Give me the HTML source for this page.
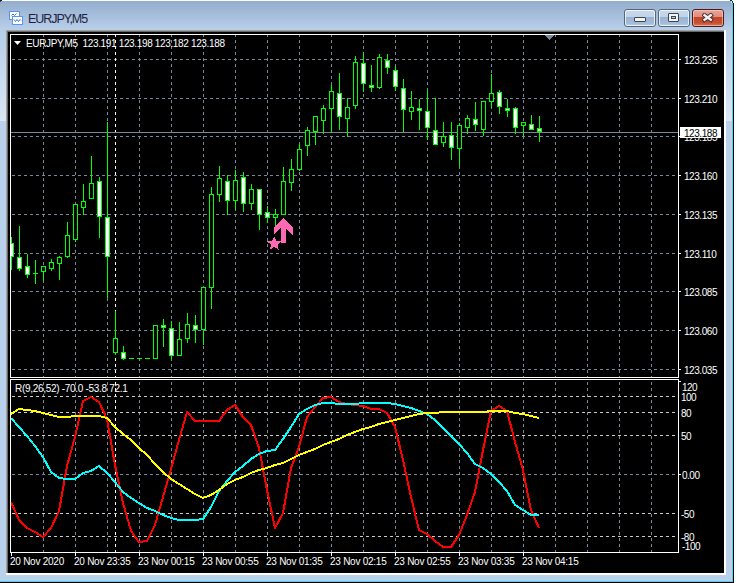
<!DOCTYPE html>
<html><head><meta charset="utf-8">
<style>
html,body{margin:0;padding:0;width:736px;height:583px;overflow:hidden;background:#ffffff;}
#win{position:absolute;left:0;top:1px;width:732px;height:581px;background:#b9d1ea;}
#title{position:absolute;left:0;top:0;width:732px;height:29px;background:linear-gradient(#93adcd,#b9d0ea);}
#redge{position:absolute;left:732px;top:3px;width:1px;height:578px;background:#40d8fa;}
#redge2{position:absolute;left:733px;top:3px;width:1px;height:580px;background:#000;}
#bedge{position:absolute;left:0;top:581px;width:733px;height:1px;background:#3ad6f6;}
#bedge2{position:absolute;left:0;top:582px;width:734px;height:1px;background:#000;}
.lbl{position:absolute;font-family:"Liberation Sans",sans-serif;font-size:10px;line-height:12px;color:#fff;white-space:nowrap;}
#client{position:absolute;left:6px;top:30px;width:720px;height:545px;}
#ttl{position:absolute;left:28px;top:12px;font-family:"Liberation Sans",sans-serif;font-size:12.5px;line-height:14px;letter-spacing:-1.05px;color:#1e1e40;}
.tb{position:absolute;top:9px;width:30px;height:16px;border:1px solid #56657a;border-radius:3px;background:linear-gradient(#c6d9ee 0,#bfd3ea 45%,#98b3d2 45%,#a4bddb 85%,#bcd2ea 100%);overflow:hidden;}
.tb .hi{position:absolute;left:0;top:0;right:0;bottom:0;border:1px solid rgba(255,255,255,0.7);border-radius:2px;}
.tb.cl{border-color:#4a1a1e;background:linear-gradient(#e9a598 0,#df8b78 45%,#c44428 45%,#c8502e 80%,#d9775c 100%);}
.tb.cl .hi{border-color:rgba(255,210,200,0.6);}
</style></head><body>
<div id="win">
 <div id="title"></div>
</div>
<div style="position:absolute;left:0;top:0;width:2px;height:1px;background:#222"></div><div style="position:absolute;left:0;top:1px;width:1px;height:1px;background:#444"></div>
<div style="position:absolute;left:730px;top:0;width:2px;height:1px;background:#0a2a30"></div><div style="position:absolute;left:732px;top:1px;width:1px;height:2px;background:#0a3a40"></div><div style="position:absolute;left:731px;top:1px;width:1px;height:2px;background:#c8f4fc"></div>
<div style="position:absolute;left:0;top:30px;width:6px;height:91px;background:linear-gradient(#b6cee8,#dbe7f4)"></div>
<div style="position:absolute;left:726px;top:30px;width:6px;height:91px;background:linear-gradient(#b6cee8,#dbe7f4)"></div>
<div style="position:absolute;left:731px;top:121px;width:1px;height:460px;background:#c4cde8"></div>
<div style="position:absolute;left:0;top:580px;width:732px;height:1px;background:#c4cde8"></div>
<div id="redge"></div><div id="redge2"></div><div id="bedge"></div><div id="bedge2"></div>
<div style="position:absolute;left:6px;top:30px;width:718px;height:1px;background:#a0a0a0"></div>
<div style="position:absolute;left:6px;top:30px;width:1px;height:543px;background:#a0a0a0"></div>
<div style="position:absolute;left:7px;top:31px;width:717px;height:1px;background:#696969"></div>
<div style="position:absolute;left:7px;top:31px;width:1px;height:542px;background:#696969"></div>
<div style="position:absolute;left:6px;top:573px;width:720px;height:2px;background:#fff"></div>
<div style="position:absolute;left:724px;top:30px;width:2px;height:545px;background:#fff"></div>
<div style="position:absolute;left:8px;top:32px;width:716px;height:541px;background:#000"></div>
<svg style="position:absolute;left:0;top:0" width="736" height="583" shape-rendering="crispEdges">
<defs><clipPath id="cm"><rect x="11" y="35" width="667" height="342"/></clipPath><clipPath id="ci"><rect x="11" y="380" width="667" height="172"/></clipPath></defs>
<line x1="43.5" y1="34" x2="43.5" y2="377" stroke="#778899" stroke-width="1" stroke-dasharray="3 3" clip-path="url(#cm)"/>
<line x1="43.5" y1="376" x2="43.5" y2="552" stroke="#778899" stroke-width="1" stroke-dasharray="3 3" clip-path="url(#ci)"/>
<line x1="75.5" y1="34" x2="75.5" y2="377" stroke="#778899" stroke-width="1" stroke-dasharray="3 3" clip-path="url(#cm)"/>
<line x1="75.5" y1="376" x2="75.5" y2="552" stroke="#778899" stroke-width="1" stroke-dasharray="3 3" clip-path="url(#ci)"/>
<line x1="107.5" y1="34" x2="107.5" y2="377" stroke="#778899" stroke-width="1" stroke-dasharray="3 3" clip-path="url(#cm)"/>
<line x1="107.5" y1="376" x2="107.5" y2="552" stroke="#778899" stroke-width="1" stroke-dasharray="3 3" clip-path="url(#ci)"/>
<line x1="139.5" y1="34" x2="139.5" y2="377" stroke="#778899" stroke-width="1" stroke-dasharray="3 3" clip-path="url(#cm)"/>
<line x1="139.5" y1="376" x2="139.5" y2="552" stroke="#778899" stroke-width="1" stroke-dasharray="3 3" clip-path="url(#ci)"/>
<line x1="171.5" y1="34" x2="171.5" y2="377" stroke="#778899" stroke-width="1" stroke-dasharray="3 3" clip-path="url(#cm)"/>
<line x1="171.5" y1="376" x2="171.5" y2="552" stroke="#778899" stroke-width="1" stroke-dasharray="3 3" clip-path="url(#ci)"/>
<line x1="203.5" y1="34" x2="203.5" y2="377" stroke="#778899" stroke-width="1" stroke-dasharray="3 3" clip-path="url(#cm)"/>
<line x1="203.5" y1="376" x2="203.5" y2="552" stroke="#778899" stroke-width="1" stroke-dasharray="3 3" clip-path="url(#ci)"/>
<line x1="235.5" y1="34" x2="235.5" y2="377" stroke="#778899" stroke-width="1" stroke-dasharray="3 3" clip-path="url(#cm)"/>
<line x1="235.5" y1="376" x2="235.5" y2="552" stroke="#778899" stroke-width="1" stroke-dasharray="3 3" clip-path="url(#ci)"/>
<line x1="267.5" y1="34" x2="267.5" y2="377" stroke="#778899" stroke-width="1" stroke-dasharray="3 3" clip-path="url(#cm)"/>
<line x1="267.5" y1="376" x2="267.5" y2="552" stroke="#778899" stroke-width="1" stroke-dasharray="3 3" clip-path="url(#ci)"/>
<line x1="299.5" y1="34" x2="299.5" y2="377" stroke="#778899" stroke-width="1" stroke-dasharray="3 3" clip-path="url(#cm)"/>
<line x1="299.5" y1="376" x2="299.5" y2="552" stroke="#778899" stroke-width="1" stroke-dasharray="3 3" clip-path="url(#ci)"/>
<line x1="331.5" y1="34" x2="331.5" y2="377" stroke="#778899" stroke-width="1" stroke-dasharray="3 3" clip-path="url(#cm)"/>
<line x1="331.5" y1="376" x2="331.5" y2="552" stroke="#778899" stroke-width="1" stroke-dasharray="3 3" clip-path="url(#ci)"/>
<line x1="363.5" y1="34" x2="363.5" y2="377" stroke="#778899" stroke-width="1" stroke-dasharray="3 3" clip-path="url(#cm)"/>
<line x1="363.5" y1="376" x2="363.5" y2="552" stroke="#778899" stroke-width="1" stroke-dasharray="3 3" clip-path="url(#ci)"/>
<line x1="395.5" y1="34" x2="395.5" y2="377" stroke="#778899" stroke-width="1" stroke-dasharray="3 3" clip-path="url(#cm)"/>
<line x1="395.5" y1="376" x2="395.5" y2="552" stroke="#778899" stroke-width="1" stroke-dasharray="3 3" clip-path="url(#ci)"/>
<line x1="427.5" y1="34" x2="427.5" y2="377" stroke="#778899" stroke-width="1" stroke-dasharray="3 3" clip-path="url(#cm)"/>
<line x1="427.5" y1="376" x2="427.5" y2="552" stroke="#778899" stroke-width="1" stroke-dasharray="3 3" clip-path="url(#ci)"/>
<line x1="459.5" y1="34" x2="459.5" y2="377" stroke="#778899" stroke-width="1" stroke-dasharray="3 3" clip-path="url(#cm)"/>
<line x1="459.5" y1="376" x2="459.5" y2="552" stroke="#778899" stroke-width="1" stroke-dasharray="3 3" clip-path="url(#ci)"/>
<line x1="491.5" y1="34" x2="491.5" y2="377" stroke="#778899" stroke-width="1" stroke-dasharray="3 3" clip-path="url(#cm)"/>
<line x1="491.5" y1="376" x2="491.5" y2="552" stroke="#778899" stroke-width="1" stroke-dasharray="3 3" clip-path="url(#ci)"/>
<line x1="523.5" y1="34" x2="523.5" y2="377" stroke="#778899" stroke-width="1" stroke-dasharray="3 3" clip-path="url(#cm)"/>
<line x1="523.5" y1="376" x2="523.5" y2="552" stroke="#778899" stroke-width="1" stroke-dasharray="3 3" clip-path="url(#ci)"/>
<line x1="555.5" y1="34" x2="555.5" y2="377" stroke="#778899" stroke-width="1" stroke-dasharray="3 3" clip-path="url(#cm)"/>
<line x1="555.5" y1="376" x2="555.5" y2="552" stroke="#778899" stroke-width="1" stroke-dasharray="3 3" clip-path="url(#ci)"/>
<line x1="587.5" y1="34" x2="587.5" y2="377" stroke="#778899" stroke-width="1" stroke-dasharray="3 3" clip-path="url(#cm)"/>
<line x1="587.5" y1="376" x2="587.5" y2="552" stroke="#778899" stroke-width="1" stroke-dasharray="3 3" clip-path="url(#ci)"/>
<line x1="619.5" y1="34" x2="619.5" y2="377" stroke="#778899" stroke-width="1" stroke-dasharray="3 3" clip-path="url(#cm)"/>
<line x1="619.5" y1="376" x2="619.5" y2="552" stroke="#778899" stroke-width="1" stroke-dasharray="3 3" clip-path="url(#ci)"/>
<line x1="651.5" y1="34" x2="651.5" y2="377" stroke="#778899" stroke-width="1" stroke-dasharray="3 3" clip-path="url(#cm)"/>
<line x1="651.5" y1="376" x2="651.5" y2="552" stroke="#778899" stroke-width="1" stroke-dasharray="3 3" clip-path="url(#ci)"/>
<line x1="6" y1="59.5" x2="678" y2="59.5" stroke="#778899" stroke-width="1" stroke-dasharray="3 3" clip-path="url(#cm)"/>
<line x1="6" y1="98.5" x2="678" y2="98.5" stroke="#778899" stroke-width="1" stroke-dasharray="3 3" clip-path="url(#cm)"/>
<line x1="6" y1="136.5" x2="678" y2="136.5" stroke="#778899" stroke-width="1" stroke-dasharray="3 3" clip-path="url(#cm)"/>
<line x1="6" y1="175.5" x2="678" y2="175.5" stroke="#778899" stroke-width="1" stroke-dasharray="3 3" clip-path="url(#cm)"/>
<line x1="6" y1="214.5" x2="678" y2="214.5" stroke="#778899" stroke-width="1" stroke-dasharray="3 3" clip-path="url(#cm)"/>
<line x1="6" y1="253.5" x2="678" y2="253.5" stroke="#778899" stroke-width="1" stroke-dasharray="3 3" clip-path="url(#cm)"/>
<line x1="6" y1="291.5" x2="678" y2="291.5" stroke="#778899" stroke-width="1" stroke-dasharray="3 3" clip-path="url(#cm)"/>
<line x1="6" y1="330.5" x2="678" y2="330.5" stroke="#778899" stroke-width="1" stroke-dasharray="3 3" clip-path="url(#cm)"/>
<line x1="6" y1="369.5" x2="678" y2="369.5" stroke="#778899" stroke-width="1" stroke-dasharray="3 3" clip-path="url(#cm)"/>
<line x1="115.5" y1="34" x2="115.5" y2="377" stroke="#ffffff" stroke-width="1" stroke-dasharray="3 3" clip-path="url(#cm)"/>
<line x1="115.5" y1="376" x2="115.5" y2="552" stroke="#ffffff" stroke-width="1" stroke-dasharray="3 3" clip-path="url(#ci)"/>
<line x1="6" y1="396.5" x2="678" y2="396.5" stroke="#cccccc" stroke-width="1" stroke-dasharray="3 3" clip-path="url(#ci)"/>
<line x1="6" y1="412.5" x2="678" y2="412.5" stroke="#cccccc" stroke-width="1" stroke-dasharray="3 3" clip-path="url(#ci)"/>
<line x1="6" y1="435.5" x2="678" y2="435.5" stroke="#cccccc" stroke-width="1" stroke-dasharray="3 3" clip-path="url(#ci)"/>
<line x1="6" y1="513.5" x2="678" y2="513.5" stroke="#cccccc" stroke-width="1" stroke-dasharray="3 3" clip-path="url(#ci)"/>
<line x1="6" y1="536.5" x2="678" y2="536.5" stroke="#cccccc" stroke-width="1" stroke-dasharray="3 3" clip-path="url(#ci)"/>
<line x1="6" y1="474.5" x2="678" y2="474.5" stroke="#778899" stroke-width="1" stroke-dasharray="3 3" clip-path="url(#ci)"/>
<line x1="11" y1="132.5" x2="678" y2="132.5" stroke="#778899" stroke-width="1"/>
<g clip-path="url(#cm)">
<rect x="11" y="237" width="1" height="33" fill="#00ff00"/>
<rect x="9" y="243" width="5" height="14" fill="#00ff00"/>
<rect x="10" y="244" width="3" height="12" fill="#ffffff"/>
<rect x="19" y="226" width="1" height="45" fill="#00ff00"/>
<rect x="17" y="257" width="5" height="12" fill="#00ff00"/>
<rect x="18" y="258" width="3" height="10" fill="#ffffff"/>
<rect x="27" y="254" width="1" height="24" fill="#00ff00"/>
<rect x="25" y="266" width="5" height="9" fill="#00ff00"/>
<rect x="26" y="267" width="3" height="7" fill="#ffffff"/>
<rect x="35" y="260" width="1" height="24" fill="#00ff00"/>
<rect x="33" y="273" width="5" height="1" fill="#00ff00"/>
<rect x="43" y="266" width="1" height="15" fill="#00ff00"/>
<rect x="41" y="266" width="5" height="6" fill="#00ff00"/>
<rect x="42" y="267" width="3" height="4" fill="#000000"/>
<rect x="51" y="259" width="1" height="12" fill="#00ff00"/>
<rect x="49" y="262" width="5" height="7" fill="#00ff00"/>
<rect x="50" y="263" width="3" height="5" fill="#000000"/>
<rect x="59" y="256" width="1" height="24" fill="#00ff00"/>
<rect x="57" y="257" width="5" height="7" fill="#00ff00"/>
<rect x="58" y="258" width="3" height="5" fill="#000000"/>
<rect x="67" y="222" width="1" height="36" fill="#00ff00"/>
<rect x="65" y="235" width="5" height="22" fill="#00ff00"/>
<rect x="66" y="236" width="3" height="20" fill="#000000"/>
<rect x="75" y="204" width="1" height="38" fill="#00ff00"/>
<rect x="73" y="204" width="5" height="36" fill="#00ff00"/>
<rect x="74" y="205" width="3" height="34" fill="#000000"/>
<rect x="83" y="184" width="1" height="31" fill="#00ff00"/>
<rect x="81" y="201" width="5" height="7" fill="#00ff00"/>
<rect x="82" y="202" width="3" height="5" fill="#000000"/>
<rect x="91" y="156" width="1" height="43" fill="#00ff00"/>
<rect x="89" y="183" width="5" height="16" fill="#00ff00"/>
<rect x="90" y="184" width="3" height="14" fill="#000000"/>
<rect x="99" y="177" width="1" height="61" fill="#00ff00"/>
<rect x="97" y="181" width="5" height="36" fill="#00ff00"/>
<rect x="98" y="182" width="3" height="34" fill="#ffffff"/>
<rect x="107" y="122" width="1" height="176" fill="#00ff00"/>
<rect x="105" y="217" width="5" height="40" fill="#00ff00"/>
<rect x="106" y="218" width="3" height="38" fill="#ffffff"/>
<rect x="115" y="311" width="1" height="44" fill="#00ff00"/>
<rect x="113" y="338" width="5" height="15" fill="#00ff00"/>
<rect x="114" y="339" width="3" height="13" fill="#000000"/>
<rect x="123" y="346" width="1" height="14" fill="#00ff00"/>
<rect x="121" y="352" width="5" height="7" fill="#00ff00"/>
<rect x="122" y="353" width="3" height="5" fill="#ffffff"/>
<rect x="131" y="358" width="1" height="1" fill="#00ff00"/>
<rect x="129" y="358" width="5" height="1" fill="#00ff00"/>
<rect x="139" y="358" width="1" height="1" fill="#00ff00"/>
<rect x="137" y="358" width="5" height="1" fill="#00ff00"/>
<rect x="147" y="358" width="1" height="1" fill="#00ff00"/>
<rect x="145" y="358" width="5" height="1" fill="#00ff00"/>
<rect x="155" y="325" width="1" height="34" fill="#00ff00"/>
<rect x="153" y="325" width="5" height="34" fill="#00ff00"/>
<rect x="154" y="326" width="3" height="32" fill="#000000"/>
<rect x="163" y="319" width="1" height="28" fill="#00ff00"/>
<rect x="161" y="325" width="5" height="3" fill="#00ff00"/>
<rect x="162" y="326" width="3" height="1" fill="#ffffff"/>
<rect x="171" y="321" width="1" height="38" fill="#00ff00"/>
<rect x="169" y="328" width="5" height="28" fill="#00ff00"/>
<rect x="170" y="329" width="3" height="26" fill="#ffffff"/>
<rect x="179" y="322" width="1" height="34" fill="#00ff00"/>
<rect x="177" y="339" width="5" height="17" fill="#00ff00"/>
<rect x="178" y="340" width="3" height="15" fill="#000000"/>
<rect x="187" y="313" width="1" height="30" fill="#00ff00"/>
<rect x="185" y="324" width="5" height="15" fill="#00ff00"/>
<rect x="186" y="325" width="3" height="13" fill="#000000"/>
<rect x="195" y="315" width="1" height="28" fill="#00ff00"/>
<rect x="193" y="325" width="5" height="5" fill="#00ff00"/>
<rect x="194" y="326" width="3" height="3" fill="#ffffff"/>
<rect x="203" y="287" width="1" height="58" fill="#00ff00"/>
<rect x="201" y="287" width="5" height="43" fill="#00ff00"/>
<rect x="202" y="288" width="3" height="41" fill="#000000"/>
<rect x="211" y="187" width="1" height="122" fill="#00ff00"/>
<rect x="209" y="194" width="5" height="94" fill="#00ff00"/>
<rect x="210" y="195" width="3" height="92" fill="#000000"/>
<rect x="219" y="166" width="1" height="36" fill="#00ff00"/>
<rect x="217" y="178" width="5" height="17" fill="#00ff00"/>
<rect x="218" y="179" width="3" height="15" fill="#000000"/>
<rect x="227" y="175" width="1" height="40" fill="#00ff00"/>
<rect x="225" y="181" width="5" height="20" fill="#00ff00"/>
<rect x="226" y="182" width="3" height="18" fill="#ffffff"/>
<rect x="235" y="170" width="1" height="40" fill="#00ff00"/>
<rect x="233" y="180" width="5" height="21" fill="#00ff00"/>
<rect x="234" y="181" width="3" height="19" fill="#000000"/>
<rect x="243" y="172" width="1" height="40" fill="#00ff00"/>
<rect x="241" y="177" width="5" height="27" fill="#00ff00"/>
<rect x="242" y="178" width="3" height="25" fill="#ffffff"/>
<rect x="251" y="184" width="1" height="26" fill="#00ff00"/>
<rect x="249" y="189" width="5" height="15" fill="#00ff00"/>
<rect x="250" y="190" width="3" height="13" fill="#000000"/>
<rect x="259" y="189" width="1" height="41" fill="#00ff00"/>
<rect x="257" y="189" width="5" height="26" fill="#00ff00"/>
<rect x="258" y="190" width="3" height="24" fill="#ffffff"/>
<rect x="267" y="206" width="1" height="17" fill="#00ff00"/>
<rect x="265" y="212" width="5" height="6" fill="#00ff00"/>
<rect x="266" y="213" width="3" height="4" fill="#ffffff"/>
<rect x="275" y="209" width="1" height="17" fill="#00ff00"/>
<rect x="273" y="214" width="5" height="4" fill="#00ff00"/>
<rect x="274" y="215" width="3" height="2" fill="#000000"/>
<rect x="283" y="167" width="1" height="48" fill="#00ff00"/>
<rect x="281" y="181" width="5" height="34" fill="#00ff00"/>
<rect x="282" y="182" width="3" height="32" fill="#000000"/>
<rect x="291" y="159" width="1" height="32" fill="#00ff00"/>
<rect x="289" y="169" width="5" height="14" fill="#00ff00"/>
<rect x="290" y="170" width="3" height="12" fill="#000000"/>
<rect x="299" y="144" width="1" height="27" fill="#00ff00"/>
<rect x="297" y="149" width="5" height="21" fill="#00ff00"/>
<rect x="298" y="150" width="3" height="19" fill="#000000"/>
<rect x="307" y="127" width="1" height="29" fill="#00ff00"/>
<rect x="305" y="130" width="5" height="16" fill="#00ff00"/>
<rect x="306" y="131" width="3" height="14" fill="#000000"/>
<rect x="315" y="116" width="1" height="29" fill="#00ff00"/>
<rect x="313" y="116" width="5" height="16" fill="#00ff00"/>
<rect x="314" y="117" width="3" height="14" fill="#000000"/>
<rect x="323" y="105" width="1" height="29" fill="#00ff00"/>
<rect x="321" y="108" width="5" height="13" fill="#00ff00"/>
<rect x="322" y="109" width="3" height="11" fill="#000000"/>
<rect x="331" y="85" width="1" height="48" fill="#00ff00"/>
<rect x="329" y="91" width="5" height="18" fill="#00ff00"/>
<rect x="330" y="92" width="3" height="16" fill="#000000"/>
<rect x="339" y="73" width="1" height="57" fill="#00ff00"/>
<rect x="337" y="93" width="5" height="24" fill="#00ff00"/>
<rect x="338" y="94" width="3" height="22" fill="#ffffff"/>
<rect x="347" y="98" width="1" height="39" fill="#00ff00"/>
<rect x="345" y="107" width="5" height="12" fill="#00ff00"/>
<rect x="346" y="108" width="3" height="10" fill="#000000"/>
<rect x="355" y="56" width="1" height="53" fill="#00ff00"/>
<rect x="353" y="62" width="5" height="44" fill="#00ff00"/>
<rect x="354" y="63" width="3" height="42" fill="#000000"/>
<rect x="363" y="52" width="1" height="40" fill="#00ff00"/>
<rect x="361" y="63" width="5" height="21" fill="#00ff00"/>
<rect x="362" y="64" width="3" height="19" fill="#ffffff"/>
<rect x="371" y="65" width="1" height="27" fill="#00ff00"/>
<rect x="369" y="85" width="5" height="3" fill="#00ff00"/>
<rect x="370" y="86" width="3" height="1" fill="#ffffff"/>
<rect x="379" y="54" width="1" height="35" fill="#00ff00"/>
<rect x="377" y="57" width="5" height="31" fill="#00ff00"/>
<rect x="378" y="58" width="3" height="29" fill="#000000"/>
<rect x="387" y="54" width="1" height="20" fill="#00ff00"/>
<rect x="385" y="60" width="5" height="8" fill="#00ff00"/>
<rect x="386" y="61" width="3" height="6" fill="#ffffff"/>
<rect x="395" y="66" width="1" height="25" fill="#00ff00"/>
<rect x="393" y="70" width="5" height="17" fill="#00ff00"/>
<rect x="394" y="71" width="3" height="15" fill="#ffffff"/>
<rect x="403" y="79" width="1" height="53" fill="#00ff00"/>
<rect x="401" y="88" width="5" height="22" fill="#00ff00"/>
<rect x="402" y="89" width="3" height="20" fill="#ffffff"/>
<rect x="411" y="91" width="1" height="29" fill="#00ff00"/>
<rect x="409" y="107" width="5" height="5" fill="#00ff00"/>
<rect x="410" y="108" width="3" height="3" fill="#000000"/>
<rect x="419" y="99" width="1" height="31" fill="#00ff00"/>
<rect x="417" y="108" width="5" height="3" fill="#00ff00"/>
<rect x="418" y="109" width="3" height="1" fill="#ffffff"/>
<rect x="427" y="90" width="1" height="50" fill="#00ff00"/>
<rect x="425" y="111" width="5" height="17" fill="#00ff00"/>
<rect x="426" y="112" width="3" height="15" fill="#ffffff"/>
<rect x="435" y="98" width="1" height="47" fill="#00ff00"/>
<rect x="433" y="130" width="5" height="15" fill="#00ff00"/>
<rect x="434" y="131" width="3" height="13" fill="#ffffff"/>
<rect x="443" y="122" width="1" height="25" fill="#00ff00"/>
<rect x="441" y="136" width="5" height="7" fill="#00ff00"/>
<rect x="442" y="137" width="3" height="5" fill="#000000"/>
<rect x="451" y="122" width="1" height="38" fill="#00ff00"/>
<rect x="449" y="135" width="5" height="13" fill="#00ff00"/>
<rect x="450" y="136" width="3" height="11" fill="#ffffff"/>
<rect x="459" y="123" width="1" height="43" fill="#00ff00"/>
<rect x="457" y="125" width="5" height="24" fill="#00ff00"/>
<rect x="458" y="126" width="3" height="22" fill="#000000"/>
<rect x="467" y="115" width="1" height="19" fill="#00ff00"/>
<rect x="465" y="118" width="5" height="10" fill="#00ff00"/>
<rect x="466" y="119" width="3" height="8" fill="#000000"/>
<rect x="475" y="102" width="1" height="29" fill="#00ff00"/>
<rect x="473" y="119" width="5" height="6" fill="#00ff00"/>
<rect x="474" y="120" width="3" height="4" fill="#ffffff"/>
<rect x="483" y="101" width="1" height="35" fill="#00ff00"/>
<rect x="481" y="101" width="5" height="29" fill="#00ff00"/>
<rect x="482" y="102" width="3" height="27" fill="#000000"/>
<rect x="491" y="74" width="1" height="34" fill="#00ff00"/>
<rect x="489" y="93" width="5" height="9" fill="#00ff00"/>
<rect x="490" y="94" width="3" height="7" fill="#000000"/>
<rect x="499" y="90" width="1" height="24" fill="#00ff00"/>
<rect x="497" y="92" width="5" height="15" fill="#00ff00"/>
<rect x="498" y="93" width="3" height="13" fill="#ffffff"/>
<rect x="507" y="99" width="1" height="18" fill="#00ff00"/>
<rect x="505" y="108" width="5" height="3" fill="#00ff00"/>
<rect x="506" y="109" width="3" height="1" fill="#ffffff"/>
<rect x="515" y="107" width="1" height="27" fill="#00ff00"/>
<rect x="513" y="108" width="5" height="20" fill="#00ff00"/>
<rect x="514" y="109" width="3" height="18" fill="#ffffff"/>
<rect x="523" y="122" width="1" height="14" fill="#00ff00"/>
<rect x="521" y="122" width="5" height="4" fill="#00ff00"/>
<rect x="522" y="123" width="3" height="2" fill="#000000"/>
<rect x="531" y="115" width="1" height="15" fill="#00ff00"/>
<rect x="529" y="124" width="5" height="6" fill="#00ff00"/>
<rect x="530" y="125" width="3" height="4" fill="#ffffff"/>
<rect x="539" y="116" width="1" height="26" fill="#00ff00"/>
<rect x="537" y="128" width="5" height="4" fill="#00ff00"/>
<rect x="538" y="129" width="3" height="2" fill="#ffffff"/>
</g>
<polygon points="283,218 293,228 293,235 285.5,228 285.5,243 280.5,243 280.5,228 273.5,235 273.5,228" fill="#ff69b4"/>
<polygon points="274.20,236.20 276.14,241.03 281.33,241.38 277.34,244.72 278.61,249.77 274.20,247.00 269.79,249.77 271.06,244.72 267.07,241.38 272.26,241.03" fill="#ff69b4"/>
<polygon points="545,35 554,35 549.5,40" fill="#778899"/>
<polyline points="11,502 19,520 27,528 35,532 43,537 51,528 59,511 67,466 75,437 83,401 91,397 99,402 107,419 115,465 123,503 131,531 139,542 147,541 155,525 163,497 171,469 179,440 187,412 195,421 203,421 211,421 219,421 227,410 235,405 243,417 251,425 259,448 267,490 275,528 283,513 291,468 299,447 307,417 315,407 323,398 331,397 339,402 347,404 355,405 363,406 371,409 379,409 387,413 395,427 403,460 411,497 419,530 427,534 435,541 443,547 451,547 459,535 467,515 475,492 483,450 491,411 499,406 507,411 515,442 523,470 531,510 539,528" fill="none" stroke="#ff0000" stroke-width="2" stroke-linejoin="round" clip-path="url(#ci)"/>
<polyline points="11,418 19,427 27,436 35,446 43,457 51,472 59,478 67,479 75,479 83,473 91,471 99,466 107,473 115,482 123,492 131,498 139,503 147,508 155,511 163,515 171,518 179,520 187,520 195,520 203,519 211,507 219,491 227,481 235,472 243,466 251,459 259,454 267,451 275,450 283,439 291,427 299,414 307,409 315,405 323,403 331,403 339,404 347,404 355,404 363,403 371,403 379,403 387,403 395,404 403,406 411,408 419,411 427,414 435,420 443,428 451,436 459,444 467,453 475,464 483,468 491,474 499,482 507,491 515,505 523,510 531,515 539,515" fill="none" stroke="#00ffff" stroke-width="2" stroke-linejoin="round" clip-path="url(#ci)"/>
<polyline points="11,414 19,409 27,410 35,411 43,413 51,415 59,417 67,417 75,416 83,416 91,416 99,416 107,418 115,427 123,434 131,440 139,448 147,455 155,464 163,472 171,479 179,484 187,489 195,494 203,498 211,495 219,490 227,484 235,480 243,477 251,473 259,470 267,468 275,465 283,463 291,459 299,455 307,452 315,449 323,445 331,442 339,439 347,435 355,432 363,429 371,427 379,424 387,422 395,420 403,418 411,416 419,414 427,413 435,413 443,412 451,412 459,412 467,412 475,412 483,412 491,411 499,411 507,411 515,413 523,414 531,416 539,418" fill="none" stroke="#ffff00" stroke-width="2" stroke-linejoin="round" clip-path="url(#ci)"/>
<rect x="10" y="34" width="669" height="1" fill="#ffffff"/>
<rect x="10" y="34" width="1" height="344" fill="#ffffff"/>
<rect x="678" y="34" width="1" height="344" fill="#ffffff"/>
<rect x="10" y="377" width="669" height="1" fill="#ffffff"/>
<rect x="10" y="379" width="669" height="1" fill="#ffffff"/>
<rect x="10" y="379" width="1" height="174" fill="#ffffff"/>
<rect x="678" y="379" width="1" height="174" fill="#ffffff"/>
<rect x="10" y="552" width="669" height="1" fill="#ffffff"/>
<rect x="679" y="59" width="2" height="1" fill="#ffffff"/>
<rect x="679" y="98" width="2" height="1" fill="#ffffff"/>
<rect x="679" y="136" width="2" height="1" fill="#ffffff"/>
<rect x="679" y="175" width="2" height="1" fill="#ffffff"/>
<rect x="679" y="214" width="2" height="1" fill="#ffffff"/>
<rect x="679" y="253" width="2" height="1" fill="#ffffff"/>
<rect x="679" y="291" width="2" height="1" fill="#ffffff"/>
<rect x="679" y="330" width="2" height="1" fill="#ffffff"/>
<rect x="679" y="369" width="2" height="1" fill="#ffffff"/>
<rect x="679" y="381" width="2" height="1" fill="#ffffff"/>
<rect x="679" y="474" width="2" height="1" fill="#ffffff"/>
<rect x="11" y="553" width="1" height="3" fill="#ffffff"/>
<rect x="75" y="553" width="1" height="3" fill="#ffffff"/>
<rect x="139" y="553" width="1" height="3" fill="#ffffff"/>
<rect x="203" y="553" width="1" height="3" fill="#ffffff"/>
<rect x="267" y="553" width="1" height="3" fill="#ffffff"/>
<rect x="331" y="553" width="1" height="3" fill="#ffffff"/>
<rect x="395" y="553" width="1" height="3" fill="#ffffff"/>
<rect x="459" y="553" width="1" height="3" fill="#ffffff"/>
<rect x="523" y="553" width="1" height="3" fill="#ffffff"/>
</svg>
<div class="lbl" style="left:26px;top:38px;letter-spacing:-0.35px">EURJPY,M5&nbsp; 123.191 123.198 123.182 123.188</div>
<div class="lbl" style="left:15px;top:383px;letter-spacing:-0.3px">R(9,26,52) -70.0 -53.8 72.1</div>
<svg style="position:absolute;left:0;top:0" width="736" height="583"><polygon points="14,41 21,41 17.5,45" fill="#fff"/></svg>
<div class="lbl" style="left:684px;top:55px;letter-spacing:-0.45px">123.235</div><div class="lbl" style="left:684px;top:94px;letter-spacing:-0.45px">123.210</div><div class="lbl" style="left:684px;top:132px;letter-spacing:-0.45px">123.185</div><div class="lbl" style="left:684px;top:171px;letter-spacing:-0.45px">123.160</div><div class="lbl" style="left:684px;top:210px;letter-spacing:-0.45px">123.135</div><div class="lbl" style="left:684px;top:249px;letter-spacing:-0.45px">123.110</div><div class="lbl" style="left:684px;top:287px;letter-spacing:-0.45px">123.085</div><div class="lbl" style="left:684px;top:326px;letter-spacing:-0.45px">123.060</div><div class="lbl" style="left:684px;top:365px;letter-spacing:-0.45px">123.035</div><div class="lbl" style="left:682px;top:382px;letter-spacing:-0.5px">120</div><div class="lbl" style="left:681px;top:392px;letter-spacing:-0.5px">100</div><div class="lbl" style="left:681px;top:408px;letter-spacing:-0.5px">80</div><div class="lbl" style="left:681px;top:431px;letter-spacing:-0.5px">50</div><div class="lbl" style="left:682px;top:470px;letter-spacing:-0.5px">0.00</div><div class="lbl" style="left:681px;top:509px;letter-spacing:-0.5px">-50</div><div class="lbl" style="left:681px;top:532px;letter-spacing:-0.5px">-80</div><div class="lbl" style="left:682px;top:541px;letter-spacing:-0.5px">-100</div><div class="lbl" style="left:10px;top:556px;letter-spacing:-0.25px">20 Nov 2020</div><div class="lbl" style="left:74px;top:556px;letter-spacing:-0.25px">20 Nov 23:35</div><div class="lbl" style="left:138px;top:556px;letter-spacing:-0.25px">23 Nov 00:15</div><div class="lbl" style="left:202px;top:556px;letter-spacing:-0.25px">23 Nov 00:55</div><div class="lbl" style="left:266px;top:556px;letter-spacing:-0.25px">23 Nov 01:35</div><div class="lbl" style="left:330px;top:556px;letter-spacing:-0.25px">23 Nov 02:15</div><div class="lbl" style="left:394px;top:556px;letter-spacing:-0.25px">23 Nov 02:55</div><div class="lbl" style="left:458px;top:556px;letter-spacing:-0.25px">23 Nov 03:35</div><div class="lbl" style="left:522px;top:556px;letter-spacing:-0.25px">23 Nov 04:15</div>
<div style="position:absolute;left:680px;top:127px;width:41px;height:11px;background:#fff"></div>
<div class="lbl" style="left:684px;top:128px;color:#000;letter-spacing:-0.45px">123.188</div>
<div id="ttl">EURJPY,M5</div>
<div class="tb" style="left:624px"><div class="hi"></div><div style="position:absolute;left:9px;top:7px;width:10px;height:3px;background:#f4f4f0;border:1px solid #3c4454;border-radius:1px"></div></div>
<div class="tb" style="left:658px"><div class="hi"></div><div style="position:absolute;left:9px;top:3px;width:9px;height:7px;background:#f4f4f0;border:1px solid #3c4454;border-radius:1px"><div style="position:absolute;left:2px;top:2px;width:3px;height:1px;background:#c0d0e0;border:1px solid #3c4454"></div></div></div>
<div class="tb cl" style="left:692px"><div class="hi"></div><svg style="position:absolute;left:9px;top:3px" width="14" height="11"><path d="M2.5,2.2 L8.8,6.8 M8.8,2.2 L2.5,6.8" stroke="#3a2a34" stroke-width="4.2" stroke-linecap="square"/><path d="M2.5,2.2 L8.8,6.8 M8.8,2.2 L2.5,6.8" stroke="#f4f0f0" stroke-width="2.4" stroke-linecap="square"/></svg></div>
<svg style="position:absolute;left:0;top:0" width="30" height="30">
<rect x="9.5" y="11.5" width="10" height="8" fill="#fff" stroke="#5a94f2" stroke-width="1"/>
<rect x="12.5" y="16.5" width="10" height="8" fill="#fff" stroke="#5a94f2" stroke-width="1"/>
<path d="M11.5,15.5 l1.5,-1.5 l1.5,1.5 l2,-2" stroke="#3a78d8" fill="none" stroke-width="1"/>
<path d="M14,19.5 l1.5,2 l1.5,-2 l1.5,2 l1.5,-2 l1,1" stroke="#3a78d8" fill="none" stroke-width="1"/>
</svg>
</body></html>
